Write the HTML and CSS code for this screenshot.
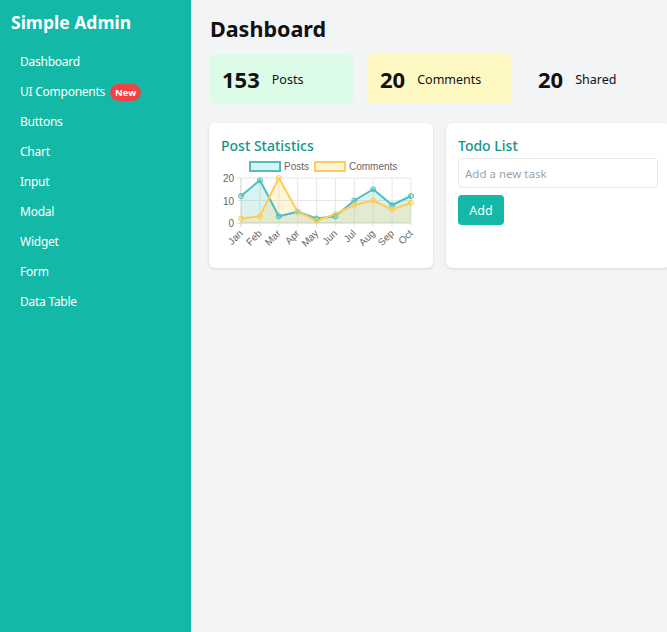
FILE: index.html
```html
<!DOCTYPE html>
<html lang="en">
<head>
<meta charset="utf-8">
<title>Simple Admin</title>
<link rel="stylesheet" href="styles.css">
</head>
<body>
<aside class="sidebar">
  <div class="brand">Simple Admin</div>
  <nav class="nav">
    <a class="nav-item" href="#">Dashboard</a>
    <a class="nav-item" href="#">UI Components <span class="badge">New</span></a>
    <a class="nav-item" href="#">Buttons</a>
    <a class="nav-item" href="#">Chart</a>
    <a class="nav-item" href="#">Input</a>
    <a class="nav-item" href="#">Modal</a>
    <a class="nav-item" href="#">Widget</a>
    <a class="nav-item" href="#">Form</a>
    <a class="nav-item" href="#">Data Table</a>
  </nav>
</aside>
<main class="main">
  <h1 class="page-title">Dashboard</h1>
  <section class="stats">
    <div class="stat stat-green"><span class="stat-num">153</span><span class="stat-label">Posts</span></div>
    <div class="stat stat-yellow"><span class="stat-num">20</span><span class="stat-label">Comments</span></div>
    <div class="stat"><span class="stat-num">20</span><span class="stat-label">Shared</span></div>
  </section>
  <section class="panels">
    <div class="card">
      <h2 class="card-title">Post Statistics</h2>
      <svg class="chart" width="200" height="96" viewBox="0 0 200 96">
        <g class="legend">
          <rect x="29" y="5" width="30" height="9" fill="rgba(75,192,192,0.2)" stroke="#4bc0c0" stroke-width="2"/>
          <text x="63" y="13">Posts</text>
          <rect x="94" y="5" width="30" height="9" fill="rgba(255,205,86,0.2)" stroke="#ffcd56" stroke-width="2"/>
          <text x="128" y="13">Comments</text>
        </g>
        <g class="grid" stroke="#e6e6e6" stroke-width="1">
          <line x1="16" y1="21" x2="190" y2="21"/>
          <line x1="16" y1="43.5" x2="190" y2="43.5"/>
          <line x1="16" y1="66" x2="190" y2="66" stroke="#cfcfcf"/>
          <line x1="20" y1="21" x2="20" y2="70" stroke="#cfcfcf"/>
          <line x1="38.9" y1="21" x2="38.9" y2="70"/>
          <line x1="57.8" y1="21" x2="57.8" y2="70"/>
          <line x1="76.7" y1="21" x2="76.7" y2="70"/>
          <line x1="95.6" y1="21" x2="95.6" y2="70"/>
          <line x1="114.4" y1="21" x2="114.4" y2="70"/>
          <line x1="133.3" y1="21" x2="133.3" y2="70"/>
          <line x1="152.2" y1="21" x2="152.2" y2="70"/>
          <line x1="171.1" y1="21" x2="171.1" y2="70"/>
          <line x1="190" y1="21" x2="190" y2="70"/>
        </g>
        <g class="axis">
          <text x="13" y="25" text-anchor="end">20</text>
          <text x="13" y="47.5" text-anchor="end">10</text>
          <text x="13" y="70" text-anchor="end">0</text>
          <text transform="translate(22.5,77) rotate(-45)" text-anchor="end">Jan</text>
          <text transform="translate(41.4,77) rotate(-45)" text-anchor="end">Feb</text>
          <text transform="translate(60.3,77) rotate(-45)" text-anchor="end">Mar</text>
          <text transform="translate(79.2,77) rotate(-45)" text-anchor="end">Apr</text>
          <text transform="translate(98.1,77) rotate(-45)" text-anchor="end">May</text>
          <text transform="translate(116.9,77) rotate(-45)" text-anchor="end">Jun</text>
          <text transform="translate(135.8,77) rotate(-45)" text-anchor="end">Jul</text>
          <text transform="translate(154.7,77) rotate(-45)" text-anchor="end">Aug</text>
          <text transform="translate(173.6,77) rotate(-45)" text-anchor="end">Sep</text>
          <text transform="translate(192.5,77) rotate(-45)" text-anchor="end">Oct</text>
        </g>
        <polygon fill="rgba(75,192,192,0.2)" points="20,66 20,39 38.9,23.25 57.8,59.25 76.7,54.75 95.6,61.5 114.4,59.25 133.3,43.5 152.2,32.25 171.1,48 190,39 190,66"/>
        <polygon fill="rgba(255,205,86,0.2)" points="20,66 20,61.5 38.9,59.25 57.8,21 76.7,54.75 95.6,63.75 114.4,57 133.3,48 152.2,43.5 171.1,52.5 190,45.75 190,66"/>
        <polyline fill="none" stroke="#4bc0c0" stroke-width="2" stroke-linejoin="round" points="20,39 38.9,23.25 57.8,59.25 76.7,54.75 95.6,61.5 114.4,59.25 133.3,43.5 152.2,32.25 171.1,48 190,39"/>
        <polyline fill="none" stroke="#ffcd56" stroke-width="2" stroke-linejoin="round" points="20,61.5 38.9,59.25 57.8,21 76.7,54.75 95.6,63.75 114.4,57 133.3,48 152.2,43.5 171.1,52.5 190,45.75"/>
        <g fill="rgba(75,192,192,0.25)" stroke="#4bc0c0" stroke-width="1">
          <circle cx="20" cy="39" r="2.5"/><circle cx="38.9" cy="23.25" r="2.5"/><circle cx="57.8" cy="59.25" r="2.5"/><circle cx="76.7" cy="54.75" r="2.5"/><circle cx="95.6" cy="61.5" r="2.5"/><circle cx="114.4" cy="59.25" r="2.5"/><circle cx="133.3" cy="43.5" r="2.5"/><circle cx="152.2" cy="32.25" r="2.5"/><circle cx="171.1" cy="48" r="2.5"/><circle cx="190" cy="39" r="2.5"/>
        </g>
        <g fill="rgba(255,205,86,0.25)" stroke="#ffcd56" stroke-width="1">
          <circle cx="20" cy="61.5" r="2.5"/><circle cx="38.9" cy="59.25" r="2.5"/><circle cx="57.8" cy="21" r="2.5"/><circle cx="76.7" cy="54.75" r="2.5"/><circle cx="95.6" cy="63.75" r="2.5"/><circle cx="114.4" cy="57" r="2.5"/><circle cx="133.3" cy="48" r="2.5"/><circle cx="152.2" cy="43.5" r="2.5"/><circle cx="171.1" cy="52.5" r="2.5"/><circle cx="190" cy="45.75" r="2.5"/>
        </g>
      </svg>
    </div>
    <div class="card">
      <h2 class="card-title">Todo List</h2>
      <input class="todo-input" type="text" placeholder="Add a new task">
      <button class="btn" type="button">Add</button>
    </div>
  </section>
</main>
</body>
</html>
```
FILE: styles.css
```css
* { box-sizing: border-box; }
html, body { margin: 0; padding: 0; }
body {
  display: flex;
  height: 632px;
  overflow: hidden;
  background: #f3f4f6;
  font-family: "Noto Sans", "Open Sans", sans-serif;
  color: #111;
}
.sidebar {
  flex: 0 0 191px;
  background: #14b8a6;
  color: #fff;
  padding: 9px 11px;
}
.brand {
  font-size: 17.5px;
  font-weight: 700;
  line-height: 26px;
  margin-bottom: 12px;
}
.nav { display: flex; flex-direction: column; padding-left: 9px; }
.nav-item {
  color: #fff;
  text-decoration: none;
  font-size: 12px;
  letter-spacing: -0.25px;
  line-height: 30px;
  height: 30px;
  display: flex;
  align-items: center;
  gap: 5px;
}
.badge {
  background: #ef4444;
  color: #fff;
  font-size: 9.5px;
  font-weight: 700;
  letter-spacing: 0;
  line-height: 17px;
  height: 17px;
  padding: 0 5px;
  border-radius: 9px;
}
.main {
  flex: 0 0 auto;
  padding: 15px 18px;
}
.page-title {
  margin: 0 0 11px;
  font-size: 21.5px;
  line-height: 28px;
  font-weight: 700;
  padding-left: 1px;
}
.stats {
  display: grid;
  grid-template-columns: repeat(3, 145px);
  gap: 13px;
  margin-bottom: 19px;
}
.stat {
  height: 50px;
  border-radius: 6px;
  display: flex;
  align-items: center;
  padding: 0 13px;
  gap: 12px;
}
.stat-green { background: #dcfce7; }
.stat-yellow { background: #fef9c3; }
.stat-num { font-size: 22px; font-weight: 700; }
.stat-label { font-size: 12.5px; }
.panels {
  display: grid;
  grid-template-columns: repeat(2, 224px);
  gap: 13px;
}
.card {
  background: #fff;
  border-radius: 6px;
  box-shadow: 0 1px 3px rgba(0,0,0,0.12);
  padding: 12px 12px 16px;
  height: 145px;
}
.card-title {
  margin: 0 0 2px;
  font-size: 14px;
  font-weight: 500;
  line-height: 21px;
  color: #12958a;
}
.chart { display: block; margin-top: -1px; }
.legend text, .axis text {
  font-family: "Liberation Sans", Arial, sans-serif;
  font-size: 10px;
  fill: #666;
}
.todo-input {
  display: block;
  width: 200px;
  height: 30px;
  border: 1px solid #e5e7eb;
  border-radius: 4px;
  padding: 0 6px;
  font-family: inherit;
  font-size: 11.5px;
  color: #111;
  margin-bottom: 7px;
}
.todo-input::placeholder { color: #9ca3af; }
.btn {
  display: block;
  width: 46px;
  height: 30px;
  border: none;
  border-radius: 4px;
  background: #14b8a6;
  color: #fff;
  font-family: inherit;
  font-size: 12.5px;
  padding: 0;
}
```
